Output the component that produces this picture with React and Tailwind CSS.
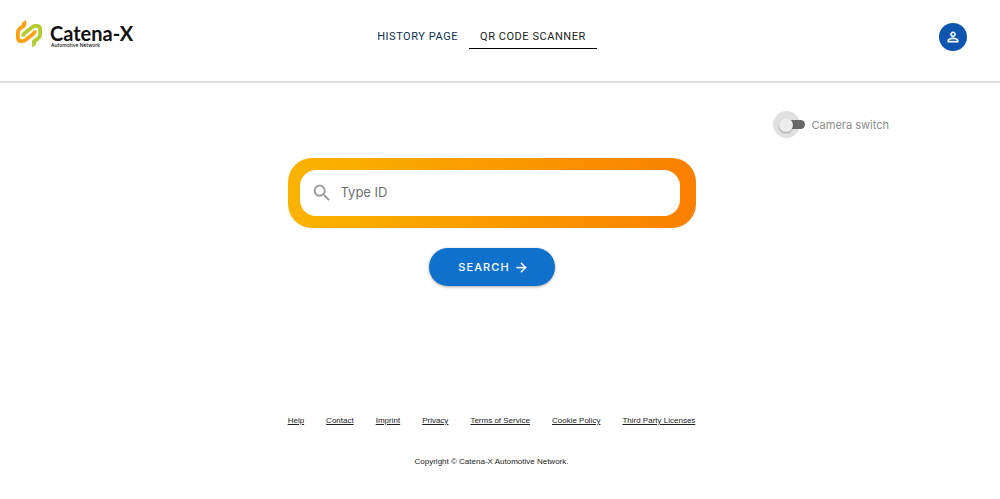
import React from "react";

const footerLinks = [
  "Help",
  "Contact",
  "Imprint",
  "Privacy",
  "Terms of Service",
  "Cookie Policy",
  "Third Party Licenses",
];

function Logo() {
  return (
    <a href="#home" className="flex items-start gap-2 text-[#111]">
      <svg width="26" height="28" viewBox="0 0 26 28" fill="none" aria-hidden="true">
        <path
          d="M8 3V5.500L3.800 8.600Q1.900 10.200 1.900 12.500V17.500Q1.900 21.100 5.500 21.100H6.500Q8 21.100 9.500 20L17.500 13.800Q19 12.600 19 10.500"
          stroke="#ffa011"
          strokeWidth="3.800"
        />
        <path d="M6.100 2.500L10.200 0V5.500L6.100 8Z" fill="#ffa011" />
        <path
          d="M18 24V21.500L22.200 18.400Q24.100 16.800 24.100 14.500V9.500Q24.100 5.900 20.500 5.900H19.500Q18 5.900 16.500 7L8.500 13.200Q7 14.400 7 16.500"
          stroke="#b3cb2d"
          strokeWidth="3.800"
        />
        <path d="M16.100 21.500L19.900 19V25L16.100 27.500Z" fill="#b3cb2d" />
      </svg>
      <span className="flex flex-col pt-[3px]">
        <span className="font-['Lato'] text-xl font-bold leading-5">Catena-X</span>
        <span className="pl-px font-['Inter'] text-[5px] font-medium leading-[5px]">Automotive Network</span>
      </span>
    </a>
  );
}

function Header() {
  return (
    <header className="border-b-2 border-[#dedede]">
      <div className="mr-[17px] grid h-[81px] grid-cols-[1fr_auto_1fr] items-start px-4">
        <div className="pt-5">
          <Logo />
        </div>
        <nav className="mr-5 flex pt-[26px] font-['Roboto'] text-[11px] leading-[22px] tracking-wider">
          <a href="#history" className="px-[11px] text-[#0d2f4f]">HISTORY PAGE</a>
          <a href="#scanner" className="border-b border-black px-[11px] text-[#222]">QR CODE SCANNER</a>
        </nav>
        <div className="flex justify-end pt-[23px]">
          <button
            type="button"
            aria-label="Account"
            className="flex size-7 items-center justify-center rounded-full bg-[#0d55af] text-white"
          >
            <svg width="16" height="16" viewBox="0 0 24 24" fill="currentColor" stroke="currentColor" strokeWidth="0.600" aria-hidden="true">
              <path d="M12 5.900a2.100 2.100 0 1 1 0 4.200 2.100 2.100 0 0 1 0-4.200m0 9c2.970 0 6.100 1.460 6.100 2.100v1.100H5.900V17c0-.640 3.130-2.100 6.100-2.100M12 4C9.790 4 8 5.790 8 8s1.790 4 4 4 4-1.790 4-4-1.790-4-4-4m0 9c-2.670 0-8 1.340-8 4v3h16v-3c0-2.660-5.330-4-8-4" />
            </svg>
          </button>
        </div>
      </div>
    </header>
  );
}

function CameraSwitch() {
  return (
    <label className="flex cursor-pointer items-center text-[11px] leading-4 text-[#8c8c8c]">
      <span className="relative flex h-[27px] w-8 items-center">
        <input type="checkbox" role="switch" className="peer absolute inset-0 z-10 cursor-pointer opacity-0" />
        <span className="size-[27px] rounded-full bg-[#e0e0e0]" />
        <span className="absolute right-0 h-[9px] w-5 rounded-full bg-[#686868]" />
        <span className="absolute left-[6px] size-[14px] rounded-full bg-[#ececec] shadow-[0_1px_2px_rgba(0,0,0,0.3)] peer-checked:translate-x-3" />
      </span>
      <span className="pl-[7px]">Camera switch</span>
    </label>
  );
}

export default function App() {
  return (
    <div className="min-h-screen bg-white font-['Inter','Liberation_Sans',sans-serif]">
      <Header />
      <div className="mr-[17px]">
        <main className="flex flex-col items-center">
          <div className="flex w-full justify-end pr-[94px] pt-7">
            <CameraSwitch />
          </div>
          <form className="flex flex-col items-center gap-5 pt-5" onSubmit={(e) => e.preventDefault()}>
            <div className="w-[408px] max-w-full rounded-3xl bg-linear-to-r from-[#f9b400] to-[#fa8000] py-3 pl-3 pr-4">
              <label className="flex h-[46px] items-center gap-2 rounded-2xl bg-white pl-[11px]">
                <svg width="22" height="22" viewBox="0 0 24 24" fill="#999" aria-hidden="true">
                  <path d="M15.500 14h-.790l-.280-.270C15.410 12.590 16 11.110 16 9.500 16 5.910 13.090 3 9.500 3S3 5.910 3 9.500 5.910 16 9.500 16c1.610 0 3.090-.590 4.230-1.570l.270.280v.790l5 4.990L20.490 19zm-6 0C7.010 14 5 11.990 5 9.500S7.010 5 9.500 5 14 7.010 14 9.500 11.990 14 9.500 14" />
                </svg>
                <input
                  type="text"
                  aria-label="Type ID"
                  placeholder="Type ID"
                  className="min-w-0 flex-1 text-[13px] text-[#333] outline-none placeholder:text-[#6f6f6f]"
                />
              </label>
            </div>
            <button
              type="submit"
              className="flex h-[38px] w-[126px] items-center justify-center gap-1 rounded-full bg-[#0f71cb] pl-1 text-[11px] font-medium tracking-widest text-white shadow-[0_1px_3px_rgba(0,0,0,0.35)]"
            >
              SEARCH
              <svg width="15" height="15" viewBox="0 0 24 24" fill="currentColor" stroke="currentColor" strokeWidth="0.500" aria-hidden="true">
                <path d="m12 4-1.410 1.410L16.170 11H4v2h12.170l-5.580 5.590L12 20l8-8z" />
              </svg>
            </button>
          </form>
        </main>
        <footer className="flex flex-col items-center gap-[29px] pt-[129px] font-['Liberation_Sans',Arial,sans-serif] text-[8px] leading-3 text-[#222]">
          <nav className="flex gap-[22px]">
            {footerLinks.map((name) => (
              <a key={name} href="#footer" className="underline">
                {name}
              </a>
            ))}
          </nav>
          <p>Copyright © Catena-X Automotive Network.</p>
        </footer>
      </div>
    </div>
  );
}
